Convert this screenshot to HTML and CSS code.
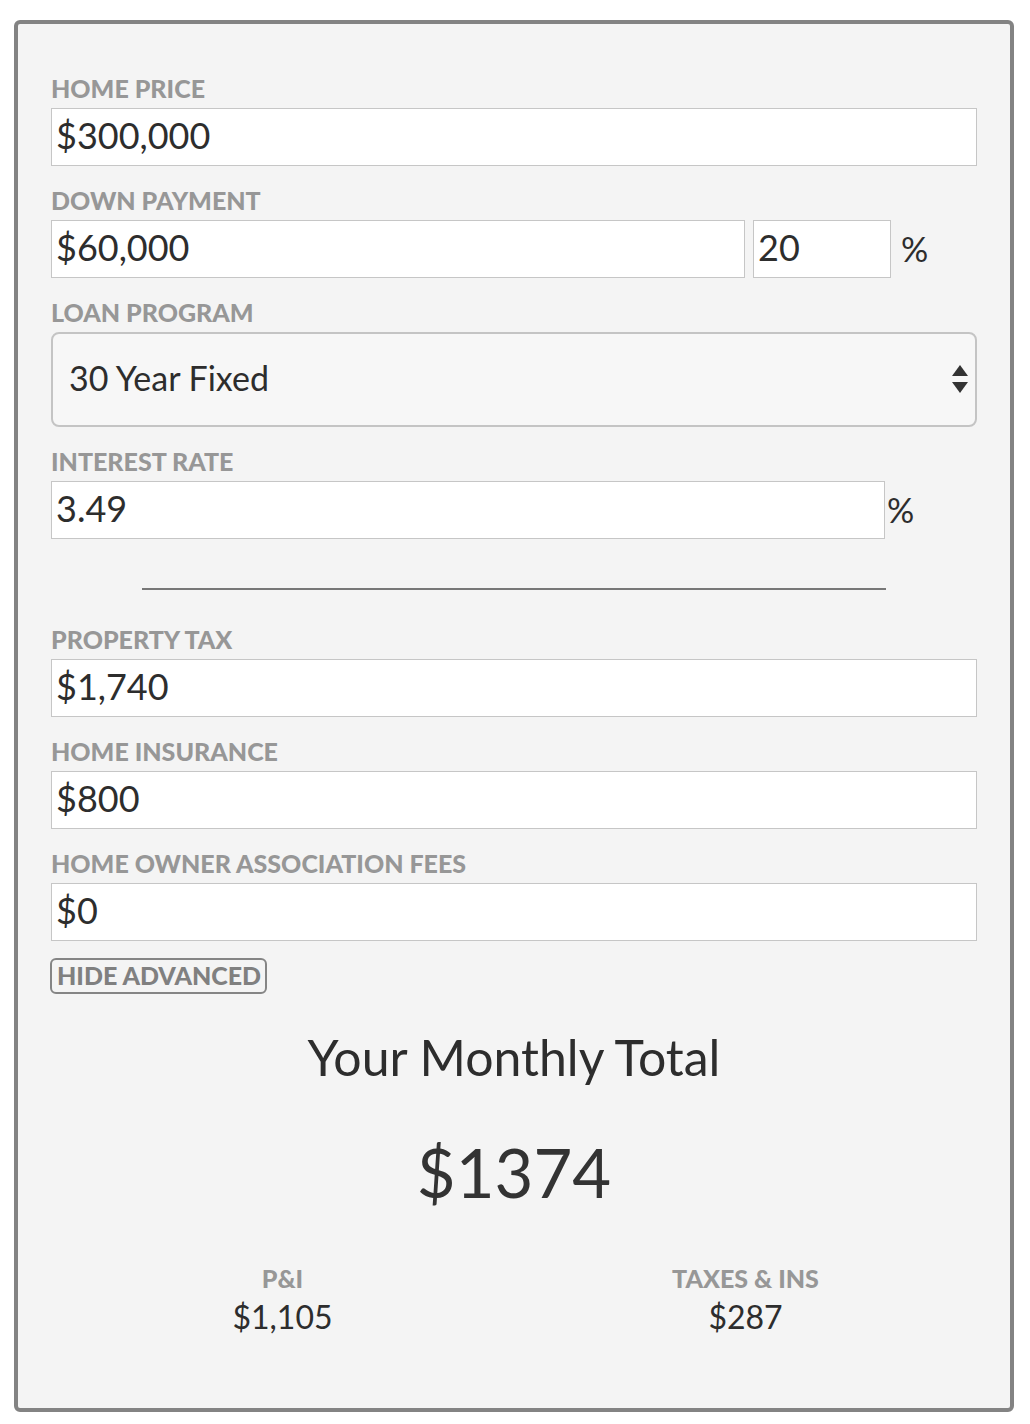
FILE: index.html
```html
<!DOCTYPE html>
<html lang="en">
<head>
<meta charset="utf-8">
<title>Mortgage Calculator</title>
<link rel="stylesheet" href="styles.css">
</head>
<body>
<div class="card">
  <div class="field">
    <label class="label">HOME PRICE</label>
    <input class="input" type="text" value="$300,000">
  </div>
  <div class="field">
    <label class="label">DOWN PAYMENT</label>
    <div class="down-row">
      <input class="input" type="text" value="$60,000">
      <input class="input" type="text" value="20">
      <span class="pct">%</span>
    </div>
  </div>
  <div class="field">
    <label class="label">LOAN PROGRAM</label>
    <div class="select-wrap">
      <select class="select">
        <option>30 Year Fixed</option>
        <option>15 Year Fixed</option>
        <option>5/1 ARM</option>
      </select>
      <svg class="select-arrows" width="16" height="30" viewBox="0 0 16 30">
        <polygon points="8,0 16,11 0,11" fill="#333"/>
        <polygon points="0,17 16,17 8,28" fill="#333"/>
      </svg>
    </div>
  </div>
  <div class="field field-last">
    <label class="label">INTEREST RATE</label>
    <div class="rate-row">
      <input class="input" type="text" value="3.49">
      <span class="pct pct-tight">%</span>
    </div>
  </div>
  <hr class="divider">
  <div class="field">
    <label class="label">PROPERTY TAX</label>
    <input class="input" type="text" value="$1,740">
  </div>
  <div class="field">
    <label class="label">HOME INSURANCE</label>
    <input class="input" type="text" value="$800">
  </div>
  <div class="field field-hoa">
    <label class="label">HOME OWNER ASSOCIATION FEES</label>
    <input class="input" type="text" value="$0">
  </div>
  <button class="toggle" type="button">HIDE ADVANCED</button>
  <div class="summary">
    <h2 class="summary-title">Your Monthly Total</h2>
    <div class="summary-total">$1374</div>
    <div class="breakdown">
      <div class="breakdown-item">
        <div class="breakdown-label">P&amp;I</div>
        <div class="breakdown-value">$1,105</div>
      </div>
      <div class="breakdown-item">
        <div class="breakdown-label">TAXES &amp; INS</div>
        <div class="breakdown-value">$287</div>
      </div>
    </div>
  </div>
</div>
</body>
</html>
```

FILE: styles.css
```css
html, body {
  margin: 0;
  padding: 0;
  background: #ffffff;
}

body {
  font-family: Lato, "Open Sans", "Liberation Sans", sans-serif;
  color: #2d2d2d;
}

.card {
  box-sizing: border-box;
  width: 1000px;
  height: 1392px;
  margin: 20px 0 0 14px;
  border: 4px solid #838383;
  border-radius: 6px;
  background: #f4f4f4;
  padding: 50px 33px 0 33px;
}

.field {
  display: flex;
  flex-direction: column;
  margin-bottom: 20px;
}

.field-last {
  margin-bottom: 0;
}

.field-hoa {
  margin-bottom: 17px;
}

.label {
  display: block;
  font-size: 25px;
  line-height: 28px;
  font-weight: 900;
  color: #979797;
  margin-bottom: 6px;
}

.input {
  box-sizing: border-box;
  width: 100%;
  height: 58px;
  margin: 0;
  padding: 0 4px 5px 4px;
  border: 1px solid #c6c6c6;
  border-radius: 0;
  background: #ffffff;
  font-family: Lato, "Open Sans", "Liberation Sans", sans-serif;
  font-size: 36px;
  color: #2d2d2d;
  outline: none;
}

.down-row {
  display: grid;
  grid-template-columns: 694px 138px auto;
  column-gap: 8px;
  align-items: center;
}

.rate-row {
  display: grid;
  grid-template-columns: 834px auto;
  column-gap: 2px;
  align-items: center;
}

.pct {
  font-size: 34px;
  color: #2d2d2d;
  padding-left: 2px;
  padding-bottom: 2px;
}

.pct-tight {
  padding-left: 0;
}

.select-wrap {
  position: relative;
}

.select {
  box-sizing: border-box;
  width: 100%;
  height: 95px;
  margin: 0;
  padding: 0 40px 4px 16px;
  -webkit-appearance: none;
  appearance: none;
  border: 2px solid #c4c4c4;
  border-radius: 8px;
  background: #f7f7f7;
  font-family: Lato, "Open Sans", "Liberation Sans", sans-serif;
  font-size: 34px;
  color: #2d2d2d;
  outline: none;
}

.select-arrows {
  position: absolute;
  right: 9px;
  top: 33px;
  pointer-events: none;
}

.divider {
  width: 744px;
  height: 0;
  margin: 49px auto 35px auto;
  border: 0;
  border-top: 2px solid #777777;
}

.toggle {
  display: block;
  box-sizing: border-box;
  height: 36px;
  margin: 0 0 0 -1px;
  padding: 0 4px 2px 5px;
  border: 2px solid #858585;
  border-radius: 6px;
  background: transparent;
  font-family: Lato, "Open Sans", "Liberation Sans", sans-serif;
  font-size: 25px;
  line-height: 30px;
  font-weight: 900;
  color: #808080;
}

.summary {
  text-align: center;
}

.summary-title {
  margin: 34px 0 0 0;
  font-size: 50px;
  line-height: 59px;
  font-weight: 400;
  color: #2d2d2d;
}

.summary-total {
  margin-top: 43px;
  font-size: 67px;
  line-height: 85px;
  font-weight: 400;
  color: #333333;
}

.breakdown {
  display: grid;
  grid-template-columns: 1fr 1fr;
  margin-top: 49px;
}

.breakdown-item {
  display: flex;
  flex-direction: column;
  align-items: center;
}

.breakdown-label {
  font-size: 25px;
  line-height: 28px;
  font-weight: 900;
  color: #979797;
}

.breakdown-value {
  margin-top: 6px;
  font-size: 32px;
  line-height: 38px;
  color: #2d2d2d;
}
```
